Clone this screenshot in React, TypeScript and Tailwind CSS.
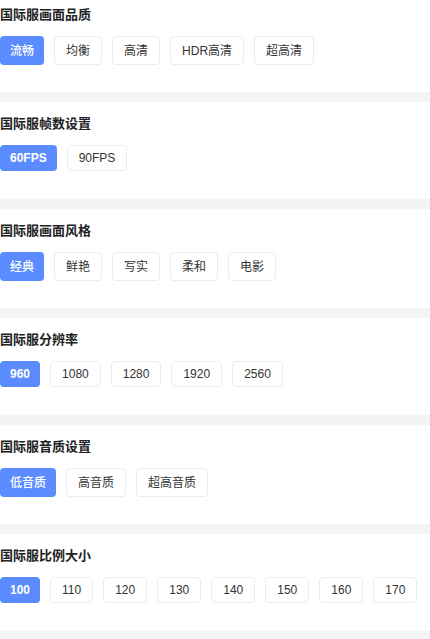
import { useState } from "react";

interface Group {
  title: string;
  options: string[];
  cjk: boolean;
}

const GROUPS: Group[] = [
  { title: "国际服画面品质", options: ["流畅", "均衡", "高清", "HDR高清", "超高清"], cjk: true },
  { title: "国际服帧数设置", options: ["60FPS", "90FPS"], cjk: false },
  { title: "国际服画面风格", options: ["经典", "鲜艳", "写实", "柔和", "电影"], cjk: true },
  { title: "国际服分辨率", options: ["960", "1080", "1280", "1920", "2560"], cjk: false },
  { title: "国际服音质设置", options: ["低音质", "高音质", "超高音质"], cjk: true },
  { title: "国际服比例大小", options: ["100", "110", "120", "130", "140", "150", "160", "170"], cjk: false },
];

function Section({ group, first }: { group: Group; first: boolean }) {
  const [sel, setSel] = useState(0);
  const pt = first ? "pt-[5px]" : "pt-3";
  const pb = group.cjk ? "pb-[27px]" : "pb-7";
  return (
    <div className={`bg-white ${pt} ${pb}`}>
      <div className="text-[13px] leading-[20px] font-bold text-[#222]">{group.title}</div>
      <div className="mt-[11px] flex flex-wrap gap-[10px]">
        {group.options.map((o, i) => {
          const active = sel === i;
          let cls = group.cjk ? "h-[29px] " : "h-[26px] ";
          if (active) {
            cls += "bg-[#5b8cff] px-[10px] text-white " + (group.cjk ? "font-medium" : "font-bold");
          } else {
            cls += "border border-[#ececec] bg-white px-[11px] text-[#333]";
          }
          return (
            <button
              key={o}
              onClick={() => setSel(i)}
              className={`${cls} flex items-center justify-center rounded-[4px] text-[12px] leading-none`}
            >
              {o}
            </button>
          );
        })}
      </div>
    </div>
  );
}

export default function App() {
  return (
    <div
      className="w-[430px] min-h-[639px] bg-white"
      style={{ fontFamily: '"Liberation Sans", "Noto Sans CJK SC", sans-serif' }}
    >
      {GROUPS.map((g, i) => (
        <div key={g.title}>
          <Section group={g} first={i === 0} />
          <div className="h-[10px] bg-[#f4f4f4]" />
        </div>
      ))}
    </div>
  );
}
